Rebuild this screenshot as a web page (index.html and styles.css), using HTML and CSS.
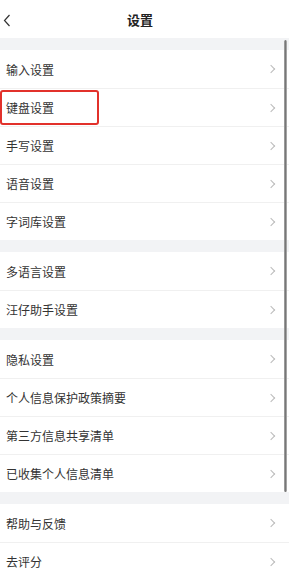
FILE: index.html
```html
<!DOCTYPE html>
<html lang="zh-CN">
<head>
    <meta charset="UTF-8">
    <meta name="viewport" content="width=device-width, initial-scale=1.0">
    <title>设置</title>
    <link rel="stylesheet" href="styles.css">
</head>
<body>
    <!-- Barra superior -->
    <header class="top-bar">
        <span class="back">
            <svg width="8" height="13" viewBox="0 0 8 13"><path d="M6.5 1 L1.5 6.5 L6.5 12" fill="none" stroke="#333" stroke-width="1.2"/></svg>
        </span>
        <h1>设置</h1>
    </header>

    <div class="page">
        <div class="scrollbar"></div>

        <div class="group">
            <div class="row">输入设置<span class="arrow"></span></div>
            <div class="row marked">键盘设置<span class="arrow"></span><span class="mark"></span></div>
            <div class="row">手写设置<span class="arrow"></span></div>
            <div class="row">语音设置<span class="arrow"></span></div>
            <div class="row">字词库设置<span class="arrow"></span></div>
        </div>

        <div class="group">
            <div class="row">多语言设置<span class="arrow"></span></div>
            <div class="row">汪仔助手设置<span class="arrow"></span></div>
        </div>

        <div class="group">
            <div class="row">隐私设置<span class="arrow"></span></div>
            <div class="row">个人信息保护政策摘要<span class="arrow"></span></div>
            <div class="row">第三方信息共享清单<span class="arrow"></span></div>
            <div class="row">已收集个人信息清单<span class="arrow"></span></div>
        </div>

        <div class="group">
            <div class="row">帮助与反馈<span class="arrow"></span></div>
            <div class="row">去评分<span class="arrow"></span></div>
        </div>
    </div>
</body>
</html>
```

FILE: styles.css
```css
body {
    margin: 0;
    font-family: "Noto Sans CJK SC", "Noto Sans", sans-serif;
    background: #fff;
    color: #333;
    overflow: hidden;
}

/* Barra superior */
.top-bar {
    height: 38px;
    display: flex;
    align-items: center;
    justify-content: center;
    padding-right: 12px;
    position: relative;
}

.top-bar h1 {
    margin: 0;
    font-size: 13px;
    font-weight: bold;
    color: #222;
}

.back {
    position: absolute;
    left: 3px;
    top: 14px;
}

.back svg {
    display: block;
}

/* Lista */
.page {
    position: relative;
    margin-right: 3px;
    background: #f2f3f5;
}

.group {
    padding-top: 12px;
}

.row {
    position: relative;
    height: 38px;
    display: flex;
    align-items: center;
    padding-left: 6px;
    font-size: 12px;
    background: #fff;
    border-top: 1px solid #f0f0f0;
    box-sizing: border-box;
}

.group .row:first-child {
    border-top: none;
}

.arrow {
    margin-left: auto;
    margin-right: 15px;
    width: 5px;
    height: 5px;
    border-top: 1px solid #bbb;
    border-right: 1px solid #bbb;
    transform: rotate(45deg);
}

/* Recuadro rojo */
.mark {
    position: absolute;
    left: 0;
    top: 1px;
    width: 99px;
    height: 35px;
    border: 2px solid #e2312b;
    border-radius: 3px;
    box-sizing: border-box;
}

.scrollbar {
    position: absolute;
    right: 2px;
    top: 2px;
    width: 3px;
    height: 452px;
    border-radius: 2px;
    background: linear-gradient(to right, #aaa, #777, #bbb);
    z-index: 2;
}
```
